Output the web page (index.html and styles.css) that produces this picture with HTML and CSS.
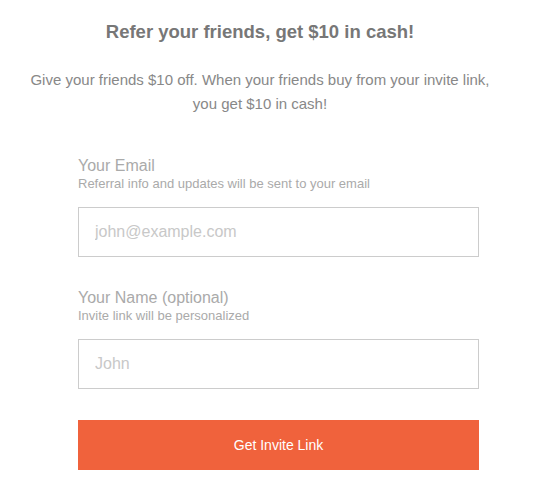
FILE: index.html
```html
<!DOCTYPE html>
<html>
<head>
<meta charset="utf-8">
<link rel="stylesheet" href="styles.css">
</head>
<body>
<div class="page">
  <header class="header">
    <h1 class="title">Refer your friends, get $10 in cash!</h1>
    <p class="intro">Give your friends $10 off. When your friends buy from your invite link, you get $10 in cash!</p>
  </header>
  <form class="form">
    <div class="field">
      <label class="label">Your Email</label>
      <div class="hint">Referral info and updates will be sent to your email</div>
      <input class="input" type="text" placeholder="john@example.com">
    </div>
    <div class="field">
      <label class="label">Your Name (optional)</label>
      <div class="hint">Invite link will be personalized</div>
      <input class="input" type="text" placeholder="John">
    </div>
    <button class="button" type="button">Get Invite Link</button>
  </form>
</div>
</body>
</html>
```
FILE: styles.css
```css
* { box-sizing: border-box; }
html, body { margin: 0; padding: 0; background: #fff; }
body { font-family: "Liberation Sans", Arial, sans-serif; }
.page { width: 560px; padding-top: 21px; }
.header { width: 520px; }
.title {
  margin: 0;
  font-size: 18.5px;
  line-height: 22px;
  font-weight: bold;
  color: #777;
  text-align: center;
}
.intro {
  margin: 25px 20px 0;
  font-size: 15px;
  line-height: 24px;
  color: #888;
  text-align: center;
}
.form {
  width: 401px;
  margin: 40px 0 0 78px;
  display: flex;
  flex-direction: column;
}
.field { display: flex; flex-direction: column; margin-bottom: 31px; }
.label { font-size: 16px; line-height: 20px; color: #aaa; }
.hint { font-size: 13px; line-height: 16px; color: #aaa; }
.input {
  margin-top: 15px;
  height: 50px;
  border: 1px solid #ccc;
  border-radius: 0;
  padding: 0 16px;
  font-family: "Liberation Sans", Arial, sans-serif;
  font-size: 16px;
  color: #555;
  outline: none;
}
.input::placeholder { color: #c8c8c8; }
.button {
  height: 50px;
  border: none;
  background: #f0623c;
  color: #fff;
  font-family: "Liberation Sans", Arial, sans-serif;
  font-size: 14px;
}
```
